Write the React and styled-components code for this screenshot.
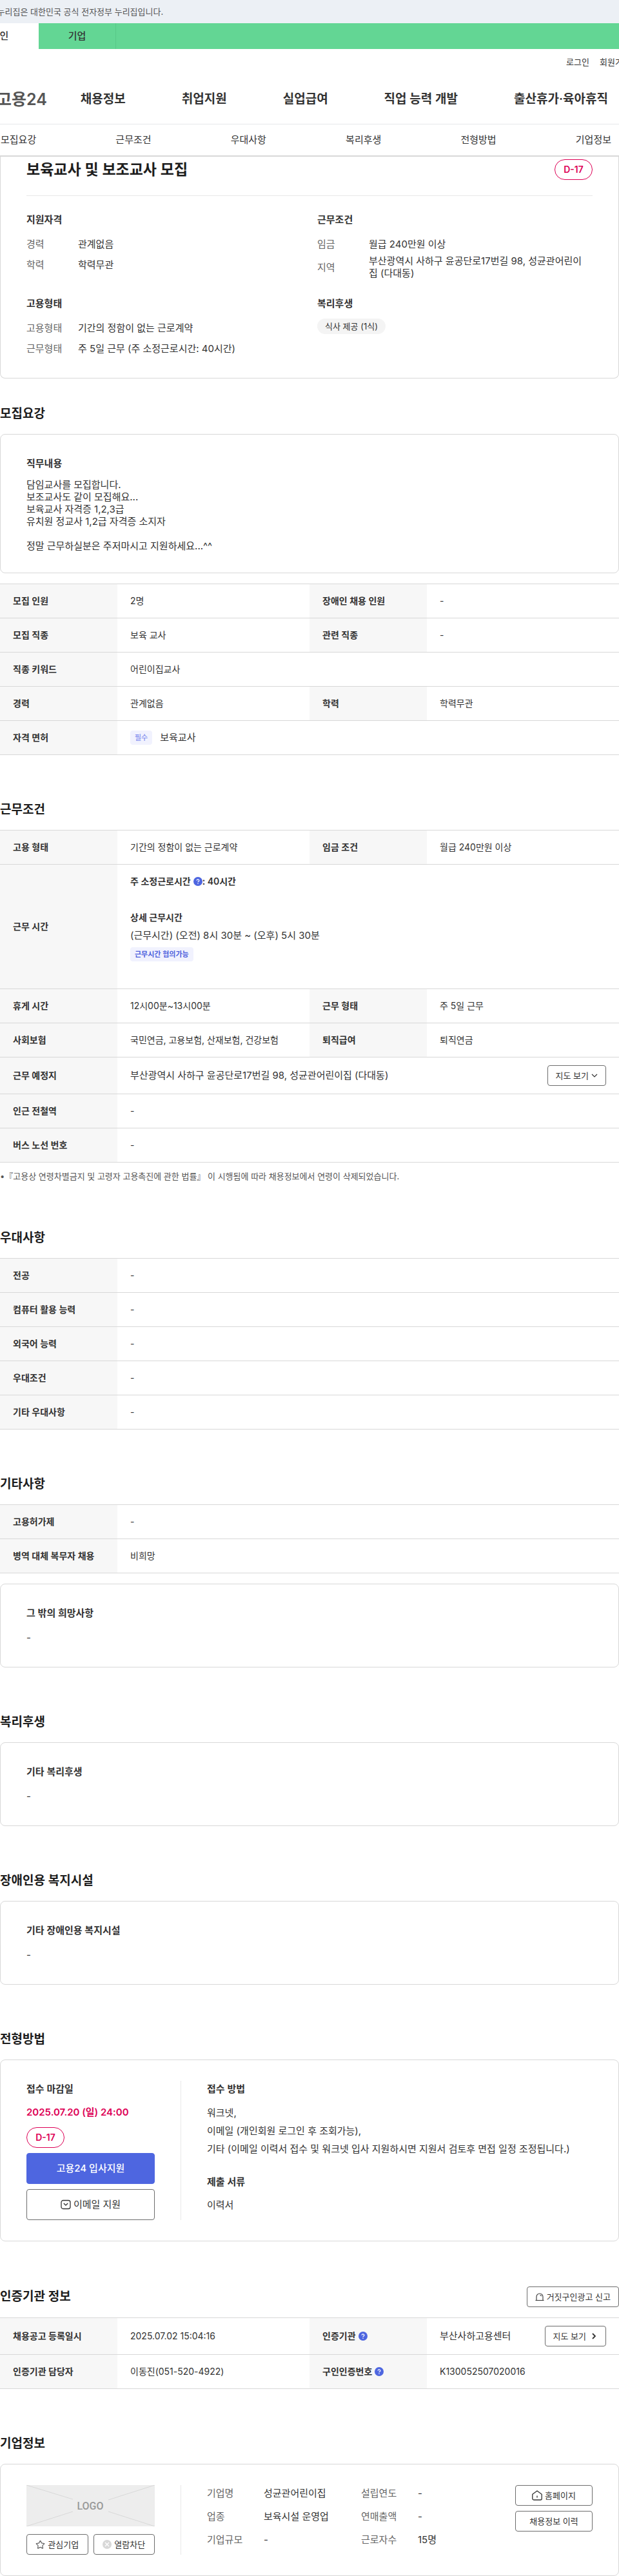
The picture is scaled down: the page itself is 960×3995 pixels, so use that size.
import styled, { createGlobalStyle } from 'styled-components';
import { Star } from 'lucide-react';

const GlobalStyle = createGlobalStyle`
    *, *::before, *::after {
        box-sizing: border-box;
    }

    body {
        margin: 0;
        background-color: #fff;
        color: #333;
        font-family: Inter, "Noto Sans CJK KR", sans-serif;
        font-size: 15px;
        line-height: 20px;
        overflow-x: hidden;
    }

    h1, h2, h3, p, dl, dd, ul {
        margin: 0;
        padding: 0;
    }

    ul {
        list-style: none;
    }

    a {
        color: inherit;
        text-decoration: none;
        white-space: nowrap;
    }

    button {
        font-family: inherit;
        cursor: pointer;
    }
`

/* Cabeçalho */

const AvisoOficial = styled.p`
    height: 36px;
    overflow: hidden;
    background-color: #ecf0f5;
    color: #555;
    font-size: 13px;
    line-height: 36px;
    white-space: nowrap;

    span {
        margin-left: -20px;
    }
`

const Abas = styled.nav`
    display: flex;
    height: 40px;
    margin-left: -60px;
    background-color: #63d694;
`

const Aba = styled.a`
    width: 120px;
    background-color: ${props => props.$ativa ? '#fff' : 'transparent'};
    border-right: 1px solid ${props => props.$ativa ? '#fff' : '#58c888'};
    font-size: 15px;
    font-weight: 500;
    line-height: 40px;
    text-align: center;
`

const Utilidades = styled.div`
    display: flex;
    justify-content: flex-end;
    gap: 16px;
    height: 40px;
    overflow: hidden;
    font-size: 13px;
    line-height: 40px;
`

const LinkRecortado = styled.a`
    width: 30px;
    overflow: hidden;
`

const MenuPrincipal = styled.nav`
    display: flex;
    align-items: center;
    height: 77px;
    border-bottom: 1px solid #e6e8ea;
`

const Logo = styled.a`
    margin-left: -5px;
    color: #555;
    font-size: 25px;
    font-weight: 600;
    line-height: 32px;
`

const ListaMenu = styled.ul`
    display: flex;
    gap: 87px;
    margin-left: 52px;
    font-size: 19px;
    font-weight: 600;
    line-height: 28px;
`

const MenuSecoes = styled.ul`
    display: flex;
    align-items: center;
    justify-content: space-between;
    height: 50px;
    padding: 0 12px 0 1px;
    border-bottom: 2px solid #d8d8d8;
`

/* Partes comuns */

const Secao = styled.section`
    margin-top: ${props => props.$proxima ? '40px' : '70px'};
`

const CabecalhoSecao = styled.header`
    display: flex;
    align-items: center;
    justify-content: space-between;
    margin-bottom: 16px;
`

const TituloSecao = styled.h2`
    color: #1d1d1d;
    font-size: 19px;
    font-weight: 600;
    line-height: 30px;
`

const Cartao = styled.div`
    padding: 32px 40px;
    border: 1px solid #d8d8d8;
    border-radius: 8px;

    table + & {
        margin-top: 16px;
    }
`

const Subtitulo = styled.h3`
    margin-bottom: ${props => props.$espaco || 10}px;
    font-size: 15px;
    font-weight: 600;
    line-height: 26px;
`

const Linha = styled.p`
    line-height: ${props => props.$altura || 26}px;
`

const Prazo = styled.span`
    display: inline-flex;
    align-items: center;
    justify-content: center;
    width: 59px;
    height: 32px;
    border: 1px solid #dd0055;
    border-radius: 16px;
    color: #dd0055;
    font-size: 14px;
    font-weight: 600;
`

const Etiqueta = styled.span`
    display: inline-block;
    padding: 0 7px;
    border-radius: 4px;
    background-color: #f1f2fe;
    color: ${props => props.$clara ? '#8490ee' : '#4e62dd'};
    font-size: 11px;
    font-weight: ${props => props.$clara ? 500 : 600};
    line-height: 22px;
`

const Botao = styled.button`
    display: flex;
    align-items: center;
    justify-content: center;
    gap: 4px;
    flex: ${props => props.$cresce ? '1' : 'none'};
    height: 32px;
    padding: 0 12px;
    border: 1px solid #6d6d6d;
    border-radius: 4px;
    background-color: #fff;
    color: #333;
    font-size: 13px;
    line-height: 20px;
    white-space: nowrap;
`

const BotaoGrande = styled(Botao)`
    width: 100%;
    height: 48px;
    margin-top: 8px;
    border-color: ${props => props.$primario ? '#4e66e0' : '#6d6d6d'};
    background-color: ${props => props.$primario ? '#4e66e0' : '#fff'};
    color: ${props => props.$primario ? '#fff' : '#333'};
    font-size: 15px;
    font-weight: ${props => props.$primario ? 500 : 400};
`

const BotaoAjuda = styled.button`
    display: inline-flex;
    padding: 0;
    margin: 0 0 0 4px;
    border: 0;
    background: none;
    vertical-align: -2px;
`

/* Resumo da vaga */

const Resumo = styled.section`
    padding: 4px 40px 30px;
    border: 1px solid #d8d8d8;
    border-top: 0;
    border-radius: 0 0 8px 8px;
`

const TopoResumo = styled.div`
    display: flex;
    align-items: center;
    justify-content: space-between;
    padding-bottom: 24px;
    border-bottom: 1px solid #e8e8e8;
`

const TituloVaga = styled.h1`
    color: #1d1d1d;
    font-size: 23px;
    font-weight: 600;
    line-height: 28px;
`

const GradeResumo = styled.div`
    display: grid;
    grid-template-columns: 1fr 1fr;
    gap: 24px;
    padding-top: 24px;
`

const Item = styled.dl`
    display: flex;
    align-items: center;
    min-height: 32px;
    padding: 1px 8px 1px 0;
    line-height: 19px;

    dt {
        flex: none;
        width: 80px;
        color: #666;
    }
`

const Beneficios = styled.div`
    display: flex;
    align-items: center;
    height: 28px;
`

const Beneficio = styled.span`
    padding: 0 12px;
    border-radius: 12px;
    background-color: #f4f4f4;
    font-size: 13px;
    line-height: 24px;
`

/* Tabelas */

const Tabela = styled.table`
    width: 100%;
    table-layout: fixed;
    border-collapse: separate;
    border-spacing: 0;
    border-top: 1px solid #d8d8d8;

    ${Cartao} + & {
        margin-top: 16px;
    }

    th, td {
        height: 53px;
        padding: 0 20px;
        border-bottom: 1px solid #d8d8d8;
        font-size: 14px;
        text-align: left;
    }

    th {
        background-color: #f7f7f7;
        font-weight: 600;
    }
`

const ColTitulo = styled.col`
    width: 182px;
`

const LinhaCelula = styled.div`
    display: flex;
    align-items: center;
    justify-content: ${props => props.$separada ? 'space-between' : 'flex-start'};
    gap: 12px;
    padding: ${props => props.$separada ? '12px 0' : '0'};
    font-size: 15px;
`

const Horario = styled.div`
    padding: 16px 0 42px;
    font-size: 15px;

    strong {
        display: block;
        font-size: 14px;
        font-weight: 600;
    }

    strong + strong {
        margin-top: 36px;
    }

    p {
        margin: 8px 0;
    }

    ${Etiqueta} {
        display: block;
        width: fit-content;
    }
`

const Nota = styled.p`
    margin-top: 10px;
    color: #555;
    font-size: 13px;
    line-height: 22px;
`

/* Cartões com duas colunas */

const Colunas = styled(Cartao)`
    display: flex;
`

const ColunaEsquerda = styled.div`
    flex: none;
    width: 199px;
    margin-right: 40px;
`

const ColunaDireita = styled.div`
    display: flex;
    flex: 1;
    flex-direction: ${props => props.$lado ? 'row' : 'column'};
    gap: ${props => props.$lado ? '0' : '24px'};
    padding-left: 40px;
    border-left: 1px solid #e8e8e8;
`

const DataLimite = styled.p`
    margin-bottom: 10px;
    color: #dd0055;
    font-weight: 600;
    line-height: 26px;
`

const TextoVaga = styled.p`
    line-height: 19px;
    white-space: pre-line;
`

const ParBotoes = styled.div`
    display: flex;
    gap: 8px;
    margin-top: 12px;

    ${Botao} {
        padding: 0;
    }
`

const PilhaBotoes = styled.div`
    display: flex;
    flex: none;
    flex-direction: column;
    gap: 8px;
    width: 120px;
`

const DadosEmpresa = styled.dl`
    display: grid;
    flex: 1;
    grid-template-columns: 88px 1fr 88px 1fr;
    grid-auto-rows: 26px;
    gap: 10px 0;
    line-height: 26px;

    dt {
        color: #666;
    }
`

const LogoEmpresa = styled.svg`
    display: block;
    width: 100%;
    height: 64px;
    background-color: #ededed;
`

function Ajuda() {
    return (
        <BotaoAjuda type="button" aria-label="도움말">
            <svg width="14" height="14" viewBox="0 0 14 14" fill="none">
                <circle cx="7" cy="7" r="7" fill="#4e66e0" />
                <path d="M5.2 5.6a1.8 1.7 0 1 1 2.7 1.4c-.6.4-.9.6-.9 1.2" stroke="#fff" strokeWidth="1.3" />
                <circle cx="7" cy="10.2" r=".8" fill="#fff" />
            </svg>
        </BotaoAjuda>
    )
}

function IconeEmail() {
    return (
        <svg width="16" height="16" viewBox="0 0 16 16" fill="none" stroke="#333" strokeWidth="1.3">
            <rect x="1" y="1.5" width="14" height="13" rx="3" />
            <path d="M4.8 6 8 9l3.2-3" />
        </svg>
    )
}

function IconeSirene() {
    return (
        <svg width="14" height="14" viewBox="0 0 14 14" fill="none" stroke="#333" strokeWidth="1.1">
            <path d="M2 12.500V7a5 5 0 0 1 10 0v5.500M.5 12.500h13M7.500 4.200A2.600 2.600 0 0 1 9.600 6.200" />
        </svg>
    )
}

function IconeCasa() {
    return (
        <svg width="16" height="16" viewBox="0 0 16 16" fill="none" stroke="#333" strokeWidth="1.3" strokeLinejoin="round">
            <path d="M.8 6.200 8 1l7.200 5.200V13a2 2 0 0 1-2 2H2.800a2 2 0 0 1-2-2zM8 8.500v3" />
        </svg>
    )
}

function IconeBloqueio() {
    return (
        <svg width="14" height="14" viewBox="0 0 14 14" stroke="#fff" strokeWidth="1.4">
            <circle cx="7" cy="7" r="7" fill="#d8d8d8" stroke="none" />
            <path d="m4 4 6 6M10 4l-6 6" />
        </svg>
    )
}

function SetaBaixo() {
    return (
        <svg width="10" height="10" viewBox="0 0 10 10" fill="none" stroke="#333" strokeWidth="1.2">
            <path d="m1 3 4 4 4-4" />
        </svg>
    )
}

function SetaDireita() {
    return (
        <svg width="14" height="12" viewBox="0 0 14 12" fill="none" stroke="#333" strokeWidth="1.8">
            <path d="m6 2 4 4-4 4" />
        </svg>
    )
}

// Cada linha traz pares [título, valor]; com um só par o valor ocupa a largura toda
function TabelaDados({ linhas }) {
    return (
        <Tabela>
            <colgroup>
                <ColTitulo />
                <col />
                <ColTitulo />
                <col />
            </colgroup>
            <tbody>
                {
                    linhas.map((linha, indice) => (
                        <tr key={indice}>
                            {
                                linha.map(([titulo, valor], coluna) => [
                                    <th key={`t${coluna}`} scope="row">{titulo}</th>,
                                    <td key={`v${coluna}`} colSpan={linha.length === 1 ? 3 : 1}>{valor}</td>
                                ])
                            }
                        </tr>
                    ))
                }
            </tbody>
        </Tabela>
    )
}

function CartaoSimples({ titulo }) {
    return (
        <Cartao>
            <Subtitulo $espaco={12}>{titulo}</Subtitulo>
            <Linha>-</Linha>
        </Cartao>
    )
}

function GrupoResumo({ titulo, itens, children }) {
    return (
        <div>
            <Subtitulo $espaco={8}>{titulo}</Subtitulo>
            {itens && itens.map(([nome, valor]) => (
                <Item key={nome}>
                    <dt>{nome}</dt>
                    <dd>{valor}</dd>
                </Item>
            ))}
            {children}
        </div>
    )
}

const menu = ['채용정보', '취업지원', '실업급여', '직업 능력 개발', '출산휴가·육아휴직']
const secoes = ['모집요강', '근무조건', '우대사항', '복리후생', '전형방법', '기업정보']

const recrutamento = [
    [['모집 인원', '2명'], ['장애인 채용 인원', '-']],
    [['모집 직종', '보육 교사'], ['관련 직종', '-']],
    [['직종 키워드', '어린이집교사']],
    [['경력', '관계없음'], ['학력', '학력무관']],
    [['자격 면허', <LinhaCelula><Etiqueta $clara>필수</Etiqueta>보육교사</LinhaCelula>]]
]

const condicoes = [
    [['고용 형태', '기간의 정함이 없는 근로계약'], ['임금 조건', '월급 240만원 이상']],
    [['근무 시간', (
        <Horario>
            <strong>주 소정근로시간<Ajuda />: 40시간</strong>
            <strong>상세 근무시간</strong>
            <p>(근무시간) (오전) 8시 30분 ~ (오후) 5시 30분</p>
            <Etiqueta>근무시간 협의가능</Etiqueta>
        </Horario>
    )]],
    [['휴게 시간', '12시00분~13시00분'], ['근무 형태', '주 5일 근무']],
    [['사회보험', '국민연금, 고용보험, 산재보험, 건강보험'], ['퇴직급여', '퇴직연금']],
    [['근무 예정지', (
        <LinhaCelula $separada>
            부산광역시 사하구 윤공단로17번길 98, 성균관어린이집 (다대동)
            <Botao type="button">지도 보기<SetaBaixo /></Botao>
        </LinhaCelula>
    )]],
    [['인근 전철역', '-']],
    [['버스 노선 번호', '-']]
]

const preferencias = ['전공', '컴퓨터 활용 능력', '외국어 능력', '우대조건', '기타 우대사항'].map(titulo => [[titulo, '-']])

const outros = [
    [['고용허가제', '-']],
    [['병역 대체 복무자 채용', '비희망']]
]

const certificacao = [
    [['채용공고 등록일시', '2025.07.02 15:04:16'], [<>인증기관<Ajuda /></>, (
        <LinhaCelula $separada>
            부산사하고용센터
            <Botao type="button">지도 보기<SetaDireita /></Botao>
        </LinhaCelula>
    )]],
    [['인증기관 담당자', '이동진(051-520-4922)'], [<>구인인증번호<Ajuda /></>, 'K130052507020016']]
]

const empresa = [
    ['기업명', '성균관어린이집'],
    ['설립연도', '-'],
    ['업종', '보육시설 운영업'],
    ['연매출액', '-'],
    ['기업규모', '-'],
    ['근로자수', '15명']
]

const descricao = `담임교사를 모집합니다.
보조교사도 같이 모집해요...
보육교사 자격증 1,2,3급
유치원 정교사 1,2급 자격증 소지자

정말 근무하실분은 주저마시고 지원하세요...^^`

function App() {
    return (
        <>
            <GlobalStyle />
            <header>
                <AvisoOficial><span>이 누리집은 대한민국 공식 전자정부 누리집입니다.</span></AvisoOficial>
                <Abas>
                    <Aba href="#" $ativa>개인</Aba>
                    <Aba href="#">기업</Aba>
                </Abas>
                <Utilidades>
                    <a href="#">로그인</a>
                    <LinkRecortado href="#">회원가입</LinkRecortado>
                </Utilidades>
                <MenuPrincipal>
                    <Logo href="#">고용24</Logo>
                    <ListaMenu>
                        {menu.map(item => <li key={item}><a href="#">{item}</a></li>)}
                    </ListaMenu>
                </MenuPrincipal>
                <nav>
                    <MenuSecoes>
                        {secoes.map(item => <li key={item}><a href="#">{item}</a></li>)}
                    </MenuSecoes>
                </nav>
            </header>
            <main>
                <Resumo>
                    <TopoResumo>
                        <TituloVaga>보육교사 및 보조교사 모집</TituloVaga>
                        <Prazo>D-17</Prazo>
                    </TopoResumo>
                    <GradeResumo>
                        <GrupoResumo titulo="지원자격" itens={[['경력', '관계없음'], ['학력', '학력무관']]} />
                        <GrupoResumo
                            titulo="근무조건"
                            itens={[
                                ['임금', '월급 240만원 이상'],
                                ['지역', '부산광역시 사하구 윤공단로17번길 98, 성균관어린이집 (다대동)']
                            ]}
                        />
                        <GrupoResumo
                            titulo="고용형태"
                            itens={[
                                ['고용형태', '기간의 정함이 없는 근로계약'],
                                ['근무형태', '주 5일 근무 (주 소정근로시간: 40시간)']
                            ]}
                        />
                        <GrupoResumo titulo="복리후생">
                            <Beneficios><Beneficio>식사 제공 (1식)</Beneficio></Beneficios>
                        </GrupoResumo>
                    </GradeResumo>
                </Resumo>

                <Secao $proxima>
                    <CabecalhoSecao><TituloSecao>모집요강</TituloSecao></CabecalhoSecao>
                    <Cartao>
                        <Subtitulo>직무내용</Subtitulo>
                        <TextoVaga>{descricao}</TextoVaga>
                    </Cartao>
                    <TabelaDados linhas={recrutamento} />
                </Secao>

                <Secao>
                    <CabecalhoSecao><TituloSecao>근무조건</TituloSecao></CabecalhoSecao>
                    <TabelaDados linhas={condicoes} />
                    <Nota>•『고용상 연령차별금지 및 고령자 고용촉진에 관한 법률』 이 시행됨에 따라 채용정보에서 연령이 삭제되었습니다.</Nota>
                </Secao>

                <Secao>
                    <CabecalhoSecao><TituloSecao>우대사항</TituloSecao></CabecalhoSecao>
                    <TabelaDados linhas={preferencias} />
                </Secao>

                <Secao>
                    <CabecalhoSecao><TituloSecao>기타사항</TituloSecao></CabecalhoSecao>
                    <TabelaDados linhas={outros} />
                    <CartaoSimples titulo="그 밖의 희망사항" />
                </Secao>

                <Secao>
                    <CabecalhoSecao><TituloSecao>복리후생</TituloSecao></CabecalhoSecao>
                    <CartaoSimples titulo="기타 복리후생" />
                </Secao>

                <Secao>
                    <CabecalhoSecao><TituloSecao>장애인용 복지시설</TituloSecao></CabecalhoSecao>
                    <CartaoSimples titulo="기타 장애인용 복지시설" />
                </Secao>

                <Secao>
                    <CabecalhoSecao><TituloSecao>전형방법</TituloSecao></CabecalhoSecao>
                    <Colunas>
                        <ColunaEsquerda>
                            <Subtitulo>접수 마감일</Subtitulo>
                            <DataLimite>2025.07.20 (일) 24:00</DataLimite>
                            <Prazo>D-17</Prazo>
                            <BotaoGrande type="button" $primario>고용24 입사지원</BotaoGrande>
                            <BotaoGrande type="button"><IconeEmail />이메일 지원</BotaoGrande>
                        </ColunaEsquerda>
                        <ColunaDireita>
                            <div>
                                <Subtitulo>접수 방법</Subtitulo>
                                <Linha $altura={28}>워크넷,</Linha>
                                <Linha $altura={28}>이메일 (개인회원 로그인 후 조회가능),</Linha>
                                <Linha $altura={28}>기타 (이메일 이력서 접수 및 워크넷 입사 지원하시면 지원서 검토후 면접 일정 조정됩니다.)</Linha>
                            </div>
                            <div>
                                <Subtitulo>제출 서류</Subtitulo>
                                <Linha>이력서</Linha>
                            </div>
                        </ColunaDireita>
                    </Colunas>
                </Secao>

                <Secao>
                    <CabecalhoSecao>
                        <TituloSecao>인증기관 정보</TituloSecao>
                        <Botao type="button"><IconeSirene />거짓구인광고 신고</Botao>
                    </CabecalhoSecao>
                    <TabelaDados linhas={certificacao} />
                </Secao>

                <Secao>
                    <CabecalhoSecao><TituloSecao>기업정보</TituloSecao></CabecalhoSecao>
                    <Colunas>
                        <ColunaEsquerda>
                            <LogoEmpresa viewBox="0 0 199 64" role="img" aria-label="LOGO">
                                <path d="M0 0l72 22M199 0l-72 23M0 64l72-23M199 64l-72-23" stroke="#d8d8d8" />
                                <text x="99" y="38" textAnchor="middle" fill="#999" fontFamily="Roboto, sans-serif" fontSize="16" fontWeight="500">LOGO</text>
                            </LogoEmpresa>
                            <ParBotoes>
                                <Botao type="button" $cresce><Star size={15} strokeWidth={2} color="#666" />관심기업</Botao>
                                <Botao type="button" $cresce><IconeBloqueio />열람차단</Botao>
                            </ParBotoes>
                        </ColunaEsquerda>
                        <ColunaDireita $lado>
                            <DadosEmpresa>
                                {empresa.map(([nome, valor]) => [
                                    <dt key={nome}>{nome}</dt>,
                                    <dd key={`${nome}-valor`}>{valor}</dd>
                                ])}
                            </DadosEmpresa>
                            <PilhaBotoes>
                                <Botao type="button"><IconeCasa />홈페이지</Botao>
                                <Botao type="button">채용정보 이력</Botao>
                            </PilhaBotoes>
                        </ColunaDireita>
                    </Colunas>
                </Secao>
            </main>
        </>
    )
}

export default App;
